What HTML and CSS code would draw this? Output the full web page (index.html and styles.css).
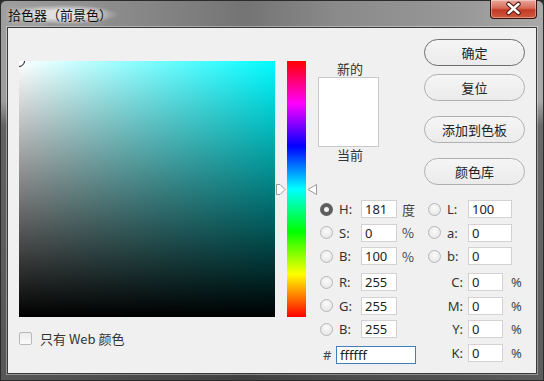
FILE: index.html
```html
<!DOCTYPE html>
<html lang="zh-CN">
<head>
    <meta charset="UTF-8">
    <title>拾色器（前景色）</title>
    <link rel="stylesheet" href="styles.css">
</head>
<body>
    <div class="window">
        <div class="titlebar">
            <span class="title">拾色器（前景色）</span>
            <div class="close">
                <svg width="47" height="19" viewBox="0 0 47 19">
                    <path d="M18.5 5 L28.5 14 M28.5 5 L18.5 14" stroke="#4a1a12" stroke-width="4.5" stroke-linecap="round"/>
                    <path d="M18.5 5 L28.5 14 M28.5 5 L18.5 14" stroke="#fff" stroke-width="2.4" stroke-linecap="round"/>
                </svg>
            </div>
        </div>

        <div class="client">
            <div class="field-col">
                <div class="field"><span class="marker"></span></div>
                <div class="web-only"><span class="checkbox"></span>只有 Web 颜色</div>
            </div>

            <div class="hue">
                <svg class="arrow arrow-left" width="10" height="11" viewBox="0 0 10 11">
                    <polygon points="0.5,0.5 4,0.5 9,5.5 4,10.5 0.5,10.5" fill="#fff" stroke="#9a9a9a"/>
                </svg>
                <svg class="arrow arrow-right" width="10" height="11" viewBox="0 0 10 11">
                    <polygon points="9.5,0.5 9.5,10.5 1,5.5" fill="#fff" stroke="#9a9a9a"/>
                </svg>
            </div>

            <div class="side">
                <div class="side-top">
                    <div class="preview">
                        <div class="preview-label">新的</div>
                        <div class="swatch"></div>
                        <div class="preview-label">当前</div>
                    </div>
                    <div class="buttons">
                        <div class="btn btn-default">确定</div>
                        <div class="btn">复位</div>
                        <div class="btn">添加到色板</div>
                        <div class="btn">颜色库</div>
                    </div>
                </div>

                <div class="values">
                    <div class="col">
                        <div class="row"><span class="radio checked"></span><span class="key">H:</span><input class="num" value="181"><span class="unit">度</span></div>
                        <div class="row"><span class="radio"></span><span class="key">S:</span><input class="num" value="0"><span class="unit">%</span></div>
                        <div class="row"><span class="radio"></span><span class="key">B:</span><input class="num" value="100"><span class="unit">%</span></div>
                        <div class="row group"><span class="radio"></span><span class="key">R:</span><input class="num" value="255"></div>
                        <div class="row"><span class="radio"></span><span class="key">G:</span><input class="num" value="255"></div>
                        <div class="row"><span class="radio"></span><span class="key">B:</span><input class="num" value="255"></div>
                        <div class="row group"><span class="hash">#</span><input class="hex" value="ffffff"></div>
                    </div>
                    <div class="col col-right">
                        <div class="row"><span class="radio"></span><span class="key">L:</span><input class="num wide" value="100"></div>
                        <div class="row"><span class="radio"></span><span class="key">a:</span><input class="num wide" value="0"></div>
                        <div class="row"><span class="radio"></span><span class="key">b:</span><input class="num wide" value="0"></div>
                        <div class="row group"><span class="key cmyk">C:</span><input class="num narrow" value="0"><span class="unit pct">%</span></div>
                        <div class="row"><span class="key cmyk">M:</span><input class="num narrow" value="0"><span class="unit pct">%</span></div>
                        <div class="row"><span class="key cmyk">Y:</span><input class="num narrow" value="0"><span class="unit pct">%</span></div>
                        <div class="row"><span class="key cmyk">K:</span><input class="num narrow" value="0"><span class="unit pct">%</span></div>
                    </div>
                </div>
            </div>
        </div>
    </div>
</body>
</html>
```

FILE: styles.css
```css
* {
    box-sizing: border-box;
}
body {
    margin: 0;
    width: 544px;
    height: 381px;
    overflow: hidden;
    background: #2a2a2a;
    font-family: "Noto Sans", "Noto Sans CJK SC", sans-serif;
    font-size: 13px;
    color: #333;
}
.window {
    width: 544px;
    height: 381px;
    display: flex;
    flex-direction: column;
    padding: 0 6px 6px;
    border: 1px solid #2b2b2b;
    border-radius: 6px 6px 0 0;
    background:
        linear-gradient(to bottom, rgba(0,0,0,0) 100px, rgba(0,0,0,0.38) 125px, rgba(0,0,0,0.45) 100%),
        linear-gradient(to right, #9e9e9e 0%, #858585 28%, #747474 45%, #8a8a8a 62%, #989898 85%, #a9a9a9 100%);
}
.titlebar {
    height: 26px;
    display: flex;
    align-items: center;
    justify-content: space-between;
}
.title {
    padding: 0 6px 0 1px;
    font-family: "Noto Sans CJK SC", sans-serif;
    font-size: 13px;
    color: #111;
    background: radial-gradient(ellipse at center, rgba(235,235,235,0.85) 30%, rgba(235,235,235,0) 72%);
    text-shadow: 0 0 6px #eee;
}
.close {
    align-self: flex-start;
    margin-top: -1px;
    width: 47px;
    height: 19px;
    border: 1px solid #3d1009;
    border-top: none;
    border-radius: 0 0 4px 4px;
    background: linear-gradient(to bottom, #e9a89c 0%, #d86a58 45%, #c23a26 55%, #cf5a3e 100%);
    box-shadow: inset 0 0 0 1px rgba(255,255,255,0.35);
}
.close svg {
    display: block;
    margin: -1px 0 0 -1px;
}
.client {
    flex: 1;
    display: flex;
    align-items: flex-start;
    padding: 11px 0 0 11px;
    background: #f0f0f0;
    border: 1px solid #3a3a3a;
    box-shadow: 0 0 0 1px rgba(255,255,255,0.35);
}

/* colour field */
.field-col {
    flex: none;
    margin-top: 22px;
}
.field {
    position: relative;
    width: 256px;
    height: 256px;
    overflow: hidden;
    background:
        linear-gradient(to top, #000, rgba(0,0,0,0)),
        linear-gradient(to right, #fff, #00fbff);
}
.marker {
    position: absolute;
    left: -6px;
    top: -6px;
    width: 12px;
    height: 12px;
    border: 1px solid #111;
    border-radius: 50%;
}
.web-only {
    display: flex;
    align-items: center;
    height: 16px;
    margin-top: 13px;
    font-family: "Noto Sans CJK SC", sans-serif;
    color: #333;
}
.checkbox {
    width: 13px;
    height: 13px;
    margin-right: 8px;
    border: 1px solid #b9b9b9;
    border-radius: 2px;
    background: linear-gradient(to bottom, #ececec, #fbfbfb);
}

/* hue slider */
.hue {
    flex: none;
    position: relative;
    width: 19px;
    height: 256px;
    margin: 22px 0 0 12px;
    background: linear-gradient(to bottom, #f00 0%, #f0f 16.67%, #00f 33.33%, #0ff 50%, #0f0 66.67%, #ff0 83.33%, #f00 100%);
}
.arrow {
    position: absolute;
    top: 123px;
}
.arrow-left {
    left: -11px;
}
.arrow-right {
    right: -11px;
}

/* right side */
.side {
    flex: none;
    margin-left: 12px;
    display: flex;
    flex-direction: column;
}
.side-top {
    display: flex;
}
.preview {
    width: 61px;
    margin-top: 22px;
    text-align: center;
    font-family: "Noto Sans CJK SC", sans-serif;
}
.preview-label {
    line-height: 16px;
    padding-left: 3px;
}
.swatch {
    height: 70px;
    background: #fff;
    border: 1px solid #c9c9c9;
}
.buttons {
    width: 101px;
    margin-left: 45px;
    display: flex;
    flex-direction: column;
}
.btn {
    height: 27px;
    margin-top: 15px;
    display: flex;
    align-items: center;
    justify-content: center;
    border: 1px solid #b0b0b0;
    border-radius: 14px;
    background: linear-gradient(to bottom, #f5f5f5, #ebebeb);
    font-family: "Noto Sans CJK SC", sans-serif;
    color: #222;
}
.btn:first-child {
    margin-top: 0;
}
.btn:nth-child(2) {
    margin-top: 8px;
}
.btn-default {
    border-color: #6e6e6e;
}

/* value fields */
.values {
    display: flex;
    margin-top: 15px;
}
.col {
    width: 110px;
    padding-left: 2px;
    display: flex;
    flex-direction: column;
}
.col-right {
    width: 97px;
    padding-left: 0;
}
.row {
    height: 18px;
    display: flex;
    align-items: center;
    margin-top: 5.5px;
}
.row:first-child {
    margin-top: 0;
}
.row.group {
    margin-top: 8px;
}
.radio {
    width: 13px;
    height: 13px;
    flex: none;
    border: 1px solid #b6b6b6;
    border-radius: 50%;
    background: radial-gradient(circle at 50% 35%, #fbfbfb, #e1e1e1);
}
.radio.checked {
    border: 4px solid #5f5f5f;
    background: #f4f4f4;
}
.key {
    flex: none;
    width: 22px;
    margin-left: 6px;
    color: #333;
}
.col-right .key {
    width: 21px;
}
.col-right .key.cmyk {
    width: 35px;
    margin-left: 0;
    text-align: right;
    margin-right: 5px;
}
.num {
    flex: none;
    width: 36px;
    height: 18px;
    padding: 0 3px;
    border: 1px solid #d2d2d2;
    background: #fff;
    font-family: "Noto Sans", sans-serif;
    font-size: 13px;
    color: #222;
    outline: none;
}
.num.wide {
    width: 44px;
}
.num.narrow {
    width: 35px;
}
.unit {
    flex: none;
    margin-left: 5px;
    font-family: "Noto Sans CJK SC", sans-serif;
    color: #444;
}
.unit.pct {
    margin-left: 8px;
    font-family: "Noto Sans", sans-serif;
}
.hash {
    flex: none;
    width: 13px;
    margin-left: 3px;
    color: #444;
}
.hex {
    flex: none;
    width: 80px;
    height: 18px;
    padding: 0 3px;
    border: 1px solid #3f7fb8;
    background: #fff;
    font-family: "Noto Sans", sans-serif;
    font-size: 13px;
    color: #222;
    outline: none;
}
```
